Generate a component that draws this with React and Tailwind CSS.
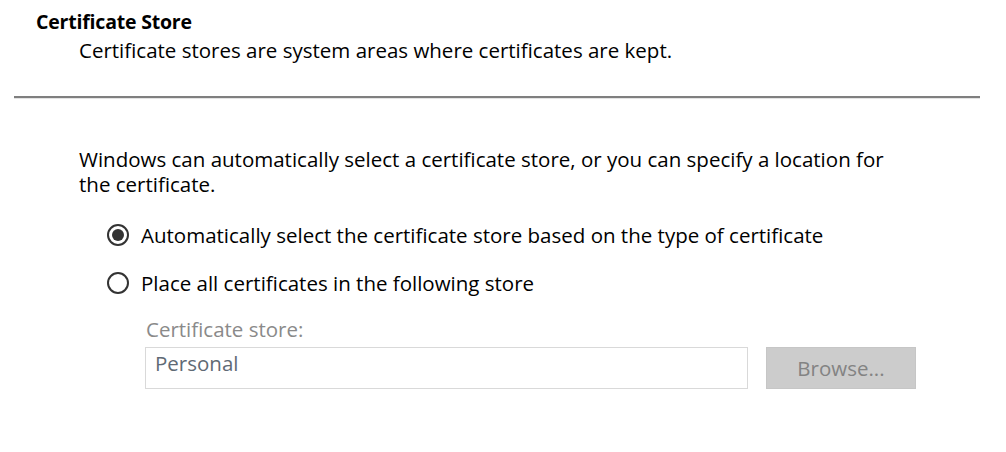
export default function App() {
  return (
    <div className="w-[1006px] h-[452px] bg-white overflow-hidden font-['Open_Sans',sans-serif] text-black">
      <div className="h-[96px]">
        <div className="pl-[36px] pt-[10px] text-[19.5px] leading-[24px] font-bold tracking-[-0.2px]">Certificate Store</div>
        <div className="pl-[79px] pt-[4px] text-[20.5px] leading-[24px]">
          Certificate stores are system areas where certificates are kept.
        </div>
      </div>
      <div className="ml-[14px] w-[966px] border-t-2 border-[#7f7f7f] border-b border-b-[#e3e3e3]" />
      <div className="pl-[79px] pt-[48px] text-[20.5px] leading-[25px] w-[920px]">
        Windows can automatically select a certificate store, or you can specify a location for the certificate.
      </div>
      <div className="pl-[107px] pt-[25px] flex flex-col gap-[22px] text-[20.5px] leading-[26px]">
        <label className="flex items-center gap-[12px]">
          <span className="w-[22px] h-[22px] rounded-full border-2 border-[#333] flex items-center justify-center">
            <span className="w-[12px] h-[12px] rounded-full bg-[#333]" />
          </span>
          Automatically select the certificate store based on the type of certificate
        </label>
        <label className="flex items-center gap-[12px]">
          <span className="w-[22px] h-[22px] rounded-full border-2 border-[#333]" />
          Place all certificates in the following store
        </label>
      </div>
      <div className="pl-[146px] pt-[21px] text-[20.5px] leading-[24px] text-[#8a8a8a]">Certificate store:</div>
      <div className="pl-[145px] pt-[6px] flex gap-[18px]">
        <div className="w-[603px] h-[42px] border border-[#d9d9d9] px-[9px] pt-[3px] text-[20.5px] leading-[24px] text-[#5f6a75]">
          Personal
        </div>
        <div className="w-[150px] h-[42px] bg-[#cccccc] border border-[#c6c6c6] flex items-center justify-center text-[20.5px] text-[#838383]">
          Browse...
        </div>
      </div>
    </div>
  )
}
